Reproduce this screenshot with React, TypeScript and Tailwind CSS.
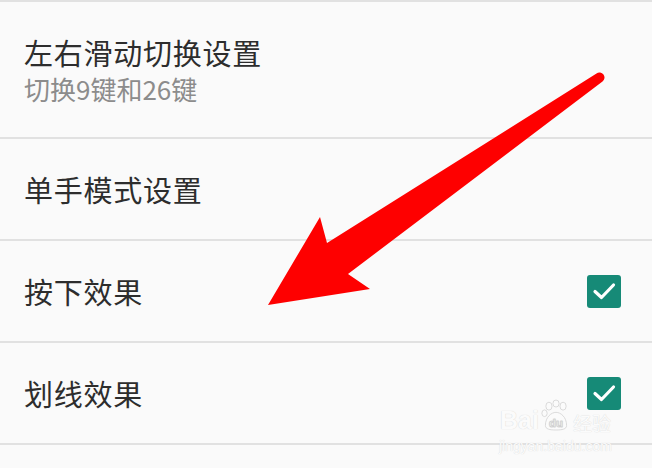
const rows = [
  { title: "左右滑动切换设置", subtitle: "切换9键和26键", height: "h-[135px]" },
  { title: "单手模式设置", height: "h-[100px]" },
  { title: "按下效果", checked: true, height: "h-[100px]" },
  { title: "划线效果", checked: true, height: "h-[100px]" },
];

function CheckBox() {
  return (
    <div className="relative z-10 w-[34px] h-[33px] rounded-[3px] bg-[#168a77] flex items-center justify-center">
      <svg width="24" height="20" viewBox="0 0 24 20">
        <path
          d="M3 10.5 L9.5 16.5 L21.5 4"
          fill="none"
          stroke="white"
          strokeWidth="3.2"
          strokeLinecap="round"
          strokeLinejoin="round"
        />
      </svg>
    </div>
  );
}

function Divider() {
  return <div className="h-[2px] bg-[#e1e1e1]" />;
}

export default function App() {
  return (
    <div className="relative w-[652px] h-[468px] overflow-hidden bg-[#fafafa] font-['Noto_Sans_CJK_SC','Noto_Sans',sans-serif]">
      <Divider />
      {rows.map((row) => (
        <div key={row.title}>
          <div className={`${row.height} flex items-center justify-between pl-6 pr-[31px]`}>
            <div className="flex flex-col">
              <span className="text-[29px] leading-[36px] tracking-[0.75px] text-[#2d2d2d]">
                {row.title}
              </span>
              {row.subtitle && (
                <span className="text-[26px] leading-[32px] text-[#8c8c8c] mt-[3px]">
                  {row.subtitle}
                </span>
              )}
            </div>
            {row.checked && <CheckBox />}
          </div>
          <Divider />
        </div>
      ))}

      {/* watermark */}
      <div className="absolute left-[499px] top-[397px] flex flex-col items-center text-[#fbfbfb] [text-shadow:0_0_1px_#cfcfcf]">
        <div className="flex items-end leading-none">
          <span className="text-[25px] font-['Liberation_Sans',sans-serif] font-bold">Bai</span>
          <svg width="30" height="36" viewBox="0 0 34 36" className="mx-[2px]">
            <g fill="#fbfbfb" stroke="#d2d2d2" strokeWidth="0.9">
              <ellipse cx="9" cy="8" rx="3.5" ry="4.5" />
              <ellipse cx="17" cy="5" rx="3.5" ry="4" />
              <ellipse cx="25" cy="8" rx="3.5" ry="4.5" />
              <ellipse cx="4" cy="16" rx="3" ry="3.8" />
              <path d="M5 30 C5 20 12 15 17 15 C22 15 29 20 29 30 C29 34 24 35 17 35 C10 35 5 34 5 30 Z" />
            </g>
            <text x="17" y="32" textAnchor="middle" fontSize="13" fontWeight="bold" fill="#fbfbfb" stroke="#cdcdcd" strokeWidth="0.6" fontFamily="Liberation Sans">
              du
            </text>
          </svg>
          <span className="text-[19px] mb-[1px]">经验</span>
        </div>
        <span className="text-[14px] leading-none mt-[6px] font-['Liberation_Sans',sans-serif]">
          jingyan.baidu.com
        </span>
      </div>

      {/* red arrow overlay */}
      <svg
        className="absolute inset-0 pointer-events-none"
        width="652"
        height="468"
        viewBox="0 0 652 468"
      >
        <path
          d="M596.5 73.5 A4.2 4.2 0 0 1 602.5 81.5 L348 274 L370 289 L268 305 L320 217 L327 243 Z"
          fill="#fe0000"
        />
      </svg>
    </div>
  );
}
